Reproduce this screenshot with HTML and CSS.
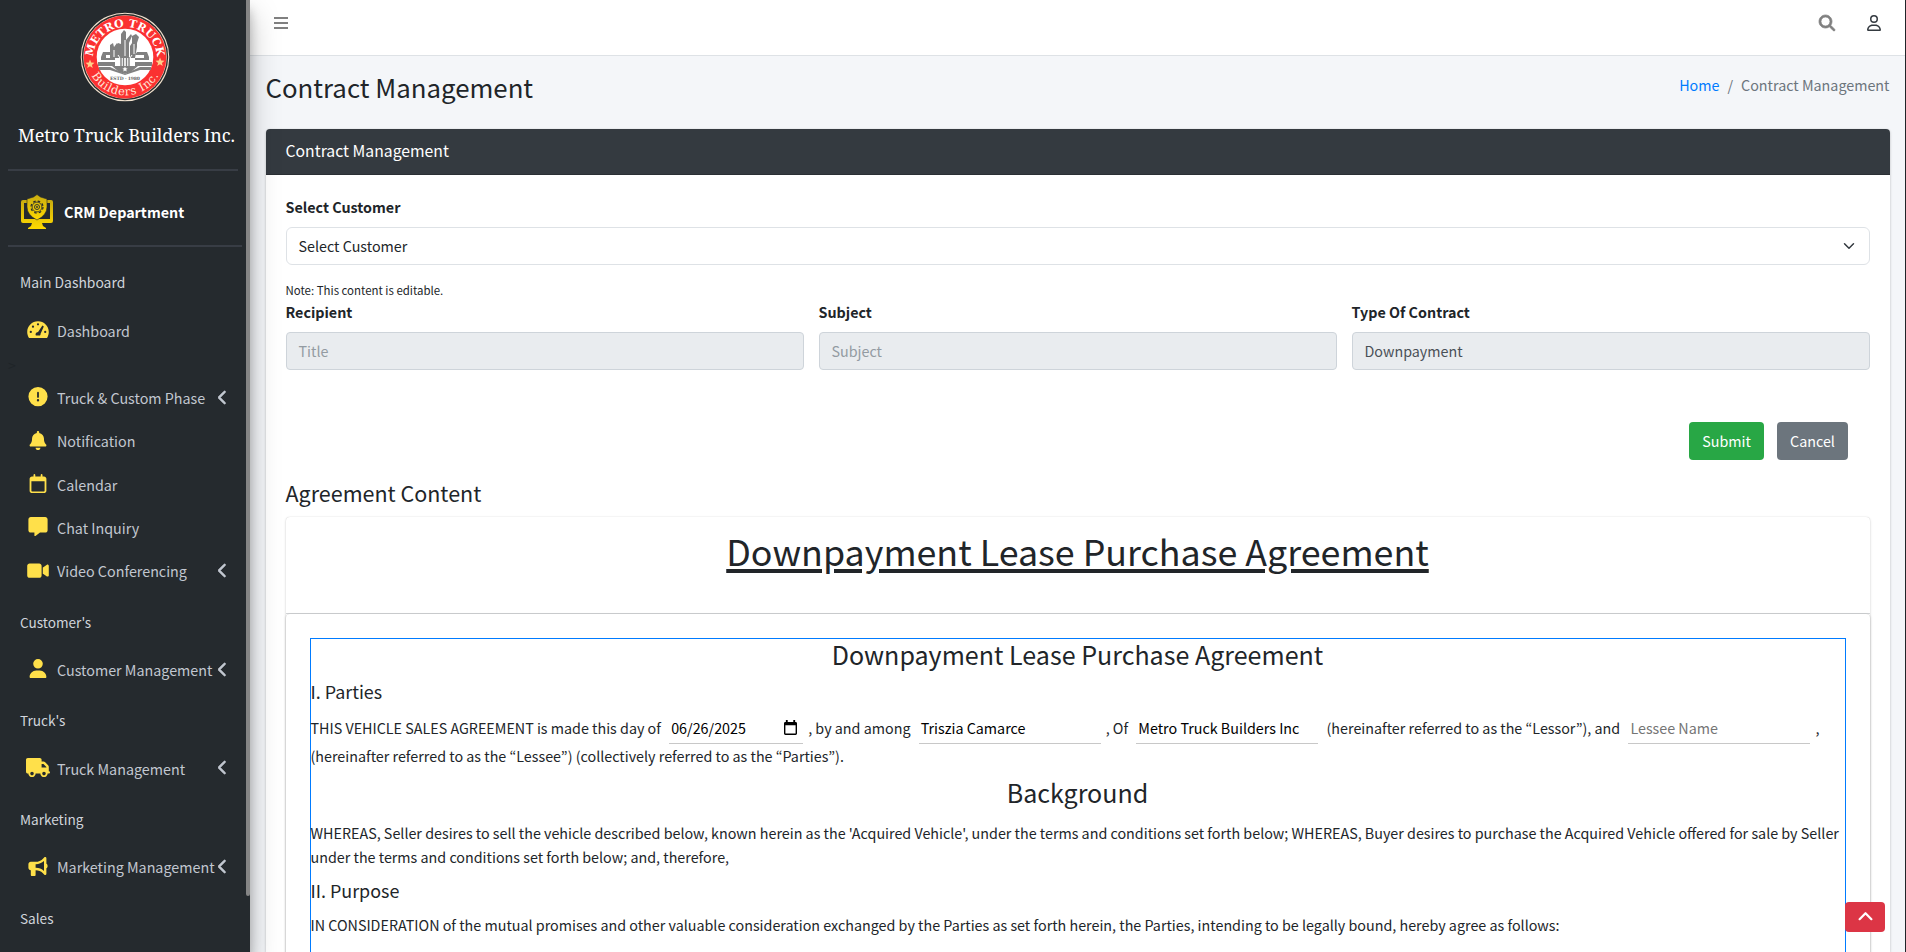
FILE: index.html
```html
<!DOCTYPE html>
<html lang="en">
<head>
<meta charset="utf-8">
<title>Contract Management</title>
<link rel="stylesheet" href="styles.css">
</head>
<body>
<svg class="defs" width="0" height="0">
  <symbol id="chev" viewBox="0 0 320 512"><path d="M9.4 233.4c-12.5 12.5-12.5 32.8 0 45.3l192 192c12.5 12.5 32.8 12.5 45.3 0s12.5-32.8 0-45.3L77.3 256 246.6 86.6c12.5-12.5 12.5-32.8 0-45.3s-32.8-12.5-45.3 0l-192 192z"/></symbol>
</svg>
<div class="app">
  <aside class="sidebar">
    <div class="brand">
      <svg class="logo" viewBox="0 0 90 90">
        <defs>
          <path id="arcTop" d="M13 47a32 32 0 0 1 64 0"/>
          <path id="arcBot" d="M6.600 45a38.400 38.400 0 0 0 76.800 0"/>
        </defs>
        <circle cx="45" cy="45" r="44.3" fill="#f3e3cf"/>
        <circle cx="45" cy="45" r="43.2" fill="#2b2b2b"/>
        <circle cx="45" cy="45" r="41.8" fill="#f3e3cf"/>
        <circle cx="45" cy="45" r="41.4" fill="#fb3131"/>
        <circle cx="45" cy="45" r="28.3" fill="#fff"/>
        <g fill="#808080">
          <path d="M30 46V33l3-2 1 4 3-4 2 2v13zM38 46V31l3 1V22l3-4 2 2v8l5-6 1 2-3 7v15zM50 46V34l2-3v-7l4-2 3 3-2 6v4l-2 11z"/>
          <path d="M23 40h10l2 3h-9v3h9v2H21v-3zM67 40H57l-2 3h9v3h-9v2h14v-3z"/>
          <path d="M18 50h17v4H18zM55 50h17v4H55zM19 55h11l15 7 15-7h11v3H60l-15 5-15-5H19z"/>
          <path d="M32 54h26l-7 6-6 2-6-2z"/>
        </g>
        <g stroke="#fff" stroke-width="1" fill="none"><path d="M38 43l2 3-2 3 2 3-2 2M52 43l-2 3 2 3-2 3 2 2M45 28v16M34 38v7M54 32v10"/></g>
        <g stroke="#808080" stroke-width="1.4"><path d="M41 45v11M43.500 45v11M46.500 45v11M49 45v11"/></g>
        <path d="M45 54.600l.8 1.600 1.800.2-1.300 1.200.3 1.800-1.600-.9-1.600.9.300-1.800-1.300-1.200 1.800-.2z" fill="#fff"/>
        <text x="45" y="68" class="est" text-anchor="middle" textLength="30">ESTD · 1980</text>
        <path id="star" d="M10 47.500l1.200 3.100 3.300.2-2.600 2.100.9 3.200-2.800-1.800-2.800 1.800.9-3.200-2.600-2.100 3.300-.2z" fill="#ffcf8a"/>
        <use href="#star" x="70" y="-2"/>
        <text class="arc-top"><textPath href="#arcTop" startOffset="50%" text-anchor="middle" textLength="96">METRO TRUCK</textPath></text>
        <text class="arc-bot"><textPath href="#arcBot" startOffset="50%" text-anchor="middle" textLength="82">Builders Inc.</textPath></text>
      </svg>
      <div class="brand-name">Metro Truck Builders Inc.</div>
    </div>
    <div class="dept">
      <svg class="dept-icon" viewBox="0 0 34 36">
        <defs><linearGradient id="gold" x1="0" y1="0" x2="0" y2="1"><stop offset="0" stop-color="#c9ac10"/><stop offset="1" stop-color="#ffd900"/></linearGradient></defs>
        <path fill="url(#gold)" fill-rule="evenodd" d="M3 6H31q2 0 2 2V27q0 2-2 2H22l1 3 3 2v1H8v-1l3-2 1-3H3q-2 0-2-2V8q0-2 2-2zM4 9v16h26V9z"/>
        <path fill="url(#gold)" stroke="#252a2e" stroke-width=".6" d="M17 .5l3.500 2.500 6.500 2v8q0 8-10 13Q7 21 7 13V5l6.500-2z"/>
        <g fill="none" stroke="#252a2e"><circle cx="17" cy="13" r="6" stroke-width="1.200" stroke-dasharray="2.600 2.110"/><circle cx="17" cy="13" r="4.900" stroke-width=".8"/><circle cx="17" cy="13" r="2.500" stroke-width=".9"/></g>
        <circle cx="17" cy="13" r=".9" fill="#252a2e"/>
      </svg>
      <span>CRM Department</span>
    </div>
    <nav class="menu">
      <div class="group first">Main Dashboard</div>
      <a class="item"><svg class="ico" viewBox="0 0 576 512"><path d="M288 32C128.940 32 0 160.940 0 320c0 52.800 14.250 102.260 39.060 144.800 5.610 9.620 16.300 15.200 27.440 15.200h443c11.140 0 21.830-5.580 27.440-15.200C561.750 422.260 576 372.800 576 320c0-159.060-128.940-288-288-288z"/><g class="hole"><circle cx="288" cy="116" r="30"/><circle cx="154" cy="180" r="30"/><circle cx="96" cy="320" r="30"/><circle cx="480" cy="320" r="30"/><path d="M405 150l38 26-86 190q2 34-16 50H232q-14-20-8-48 16-46 66-48z"/></g></svg><span>Dashboard</span></a>
      <div class="stray">&gt;</div>
      <a class="item"><svg class="ico" viewBox="0 0 512 512"><path d="M256 512A256 256 0 1 0 256 0a256 256 0 1 0 0 512zm0-384c13.300 0 24 10.700 24 24l0 112c0 13.300-10.700 24-24 24s-24-10.700-24-24l0-112c0-13.300 10.700-24 24-24zM224 352a32 32 0 1 1 64 0 32 32 0 1 1 -64 0z"/></svg><span>Truck &amp; Custom Phase</span><svg class="chev"><use href="#chev"/></svg></a>
      <a class="item"><svg class="ico" viewBox="0 0 448 512"><path d="M224 0c-17.700 0-32 14.300-32 32l0 19.200C119 66 64 130.600 64 208l0 18.800c0 47-17.300 92.400-48.500 127.600l-7.400 8.300c-8.400 9.400-10.400 22.900-5.300 34.400S19.400 416 32 416l384 0c12.600 0 24-7.400 29.200-18.900s3.100-25-5.300-34.400l-7.400-8.300C401.300 319.200 384 273.900 384 226.800l0-18.800c0-77.400-55-142-128-156.800L256 32c0-17.700-14.300-32-32-32zm45.300 493.300c12-12 18.700-28.300 18.700-45.300l-64 0-64 0c0 17 6.700 33.300 18.700 45.300s28.300 18.700 45.300 18.700s33.300-6.700 45.300-18.700z"/></svg><span>Notification</span></a>
      <a class="item"><svg class="ico" viewBox="0 0 448 512"><path fill-rule="evenodd" d="M152 24c0-13.300-10.700-24-24-24s-24 10.700-24 24v40H64C28.700 64 0 92.700 0 128v320c0 35.300 28.700 64 64 64h320c35.300 0 64-28.700 64-64V128c0-35.300-28.700-64-64-64h-40V24c0-13.300-10.700-24-24-24s-24 10.700-24 24v40H152zM48 192h352v256c0 8.800-7.200 16-16 16H64c-8.800 0-16-7.200-16-16z"/></svg><span>Calendar</span></a>
      <a class="item"><svg class="ico" viewBox="0 0 512 512"><path d="M64 0C28.700 0 0 28.700 0 64L0 352c0 35.300 28.700 64 64 64l96 0 0 80c0 6.100 3.400 11.600 8.800 14.300s11.900 2.100 16.800-1.500L309.300 416 448 416c35.300 0 64-28.700 64-64l0-288c0-35.300-28.700-64-64-64L64 0z"/></svg><span>Chat Inquiry</span></a>
      <a class="item"><svg class="ico" viewBox="0 0 576 512"><path d="M0 128C0 92.700 28.700 64 64 64l256 0c35.300 0 64 28.700 64 64l0 256c0 35.300-28.700 64-64 64L64 448c-35.300 0-64-28.700-64-64L0 128zM559.100 99.800c10.400 5.600 16.900 16.400 16.900 28.200l0 256c0 11.800-6.500 22.600-16.900 28.200s-23 5-32.900-1.600l-96-64L416 337.100l0-17.100 0-128 0-17.100 14.200-9.500 96-64c9.800-6.500 22.400-7.200 32.900-1.600z"/></svg><span>Video Conferencing</span><svg class="chev"><use href="#chev"/></svg></a>
      <div class="group">Customer's</div>
      <a class="item"><svg class="ico" viewBox="0 0 448 512"><path d="M224 256A128 128 0 1 0 224 0a128 128 0 1 0 0 256zm-45.700 48C79.800 304 0 383.800 0 482.300C0 498.700 13.300 512 29.700 512l388.600 0c16.400 0 29.700-13.300 29.700-29.700C448 383.800 368.200 304 269.700 304l-91.400 0z"/></svg><span>Customer Management</span><svg class="chev"><use href="#chev"/></svg></a>
      <div class="group">Truck's</div>
      <a class="item"><svg class="ico" viewBox="0 0 640 512"><path d="M48 0C21.500 0 0 21.500 0 48L0 368c0 26.500 21.500 48 48 48l16 0c0 53 43 96 96 96s96-43 96-96l128 0c0 53 43 96 96 96s96-43 96-96l32 0c17.700 0 32-14.300 32-32s-14.300-32-32-32l0-64 0-32 0-18.700c0-17-6.700-33.300-18.700-45.300L512 114.700c-12-12-28.300-18.700-45.300-18.700L416 96l0-48c0-26.500-21.500-48-48-48L48 0zM416 160l50.700 0L544 237.300l0 18.700-128 0 0-96zM112 416a48 48 0 1 1 96 0 48 48 0 1 1 -96 0zm368-48a48 48 0 1 1 0 96 48 48 0 1 1 0-96z"/></svg><span>Truck Management</span><svg class="chev"><use href="#chev"/></svg></a>
      <div class="group">Marketing</div>
      <a class="item"><svg class="ico" viewBox="0 0 512 512"><path d="M480 32c0-12.900-7.800-24.600-19.800-29.600s-25.700-2.200-34.900 6.900L381.700 53c-48 48-113.100 75-181 75l-8.700 0-32 0-96 0c-35.300 0-64 28.700-64 64l0 96c0 35.300 28.700 64 64 64l0 128c0 17.700 14.300 32 32 32l64 0c17.700 0 32-14.300 32-32l0-128 8.700 0c67.900 0 133 27 181 75l43.600 43.600c9.200 9.200 22.900 11.900 34.900 6.900s19.800-16.600 19.800-29.600l0-147.600c18.600-8.800 32-32.500 32-60.400s-13.400-51.600-32-60.400L480 32zm-64 76.700L416 240l0 131.300C357.200 317.800 280.500 288 200.700 288l-8.700 0 0-96 8.700 0c79.800 0 156.500-29.800 215.300-83.300z"/></svg><span>Marketing Management</span><svg class="chev"><use href="#chev"/></svg></a>
      <div class="group">Sales</div>
    </nav>
    <div class="scroll-thumb"></div>
  </aside>

  <div class="main">
    <header class="topbar">
      <svg class="burger" viewBox="0 0 14 14"><path d="M0 2h14M0 7h14M0 12h14" stroke="#808080" stroke-width="1.800"/></svg>
      <div class="topbar-right">
        <svg class="search" viewBox="0 0 512 512"><path d="M416 208c0 45.900-14.900 88.300-40 122.700L502.600 457.400c12.500 12.500 12.500 32.800 0 45.300s-32.800 12.500-45.300 0L330.700 376c-34.400 25.200-76.800 40-122.700 40C93.100 416 0 322.900 0 208S93.100 0 208 0S416 93.100 416 208zM208 352a144 144 0 1 0 0-288 144 144 0 1 0 0 288z"/></svg>
        <svg class="user" viewBox="0 0 448 512"><path d="M304 128a80 80 0 1 0 -160 0 80 80 0 1 0 160 0zM96 128a128 128 0 1 1 256 0A128 128 0 1 1 96 128zM49.300 464l349.500 0c-8.900-63.300-63.300-112-129-112l-91.400 0c-65.700 0-120.100 48.700-129 112zM0 482.300C0 383.800 79.800 304 178.300 304l91.400 0C368.200 304 448 383.800 448 482.300c0 16.400-13.300 29.700-29.700 29.700L29.700 512C13.300 512 0 498.700 0 482.300z"/></svg>
      </div>
    </header>
    <div class="page-head">
      <h1>Contract Management</h1>
      <div class="crumbs"><a>Home</a><span>/</span><span>Contract Management</span></div>
    </div>
    <section class="card">
      <div class="card-header">Contract Management</div>
      <div class="card-body">
        <label class="lbl">Select Customer</label>
        <div class="select"><span>Select Customer</span><svg viewBox="0 0 16 16"><path d="m2 5 6 6 6-6" fill="none" stroke="#343a40" stroke-width="2" stroke-linecap="round" stroke-linejoin="round"/></svg></div>
        <div class="note">Note: This content is editable.</div>
        <div class="fields">
          <div><label class="lbl">Recipient</label><div class="input ph">Title</div></div>
          <div><label class="lbl">Subject</label><div class="input ph">Subject</div></div>
          <div><label class="lbl">Type Of Contract</label><div class="input">Downpayment</div></div>
        </div>
        <div class="actions"><button class="btn submit">Submit</button><button class="btn cancel">Cancel</button></div>
        <h4>Agreement Content</h4>
        <div class="sheet">
          <div class="sheet-title">Downpayment Lease Purchase Agreement</div>
          <div class="sheet-body">
            <div class="editor">
              <h3>Downpayment Lease Purchase Agreement</h3>
              <h5>I. Parties</h5>
              <p class="parties">THIS VEHICLE SALES AGREEMENT is made this day of <span class="line date">06/26/2025<svg viewBox="0 0 14 16"><path fill-rule="evenodd" d="M2 0h2v2h6V0h2v2h.5q1.500 0 1.500 1.500v11q0 1.500-1.500 1.500h-11Q0 16 0 14.500v-11Q0 2 1.500 2H2zM1.500 5.500v9h11v-9z"/></svg></span>, by and among <span class="line">Triszia Camarce</span>, Of <span class="line">Metro Truck Builders Inc</span> (hereinafter referred to as the “Lessor”), and <span class="line hint">Lessee Name</span>,<br>(hereinafter referred to as the “Lessee”) (collectively referred to as the “Parties”).</p>
              <h3 class="bg">Background</h3>
              <p>WHEREAS, Seller desires to sell the vehicle described below, known herein as the 'Acquired Vehicle', under the terms and conditions set forth below; WHEREAS, Buyer desires to purchase the Acquired Vehicle offered for sale by Seller<br>under the terms and conditions set forth below; and, therefore,</p>
              <h5 class="purpose">II. Purpose</h5>
              <p>IN CONSIDERATION of the mutual promises and other valuable consideration exchanged by the Parties as set forth herein, the Parties, intending to be legally bound, hereby agree as follows:</p>
            </div>
          </div>
        </div>
      </div>
    </section>
  </div>
</div>
<button class="to-top"><svg viewBox="0 0 14 14"><path d="M1.500 9.500 7 4l5.500 5.500" fill="none" stroke="#fff" stroke-width="2.100" stroke-linecap="round" stroke-linejoin="round"/></svg></button>
</body>
</html>
```
FILE: styles.css
```css
* { box-sizing: border-box; }
body {
  margin: 0;
  height: 952px;
  overflow: hidden;
  font-family: "Noto Sans CJK KR", "Noto Sans CJK JP", "Noto Sans", sans-serif;
  font-size: 14.32px;
  line-height: 24px;
  color: #212529;
  background: #f4f6f9;
}
h1, h3, h4, h5, p { margin: 0; font-weight: 400; }
.defs { position: absolute; }
.app { display: flex; height: 952px; border-right: 1px solid #212529; }

/* Sidebar */
.sidebar {
  position: relative;
  z-index: 2;
  flex: 0 0 250px;
  width: 250px;
  min-width: 0;
  height: 952px;
  background: #252a2e;
  box-shadow: 0 14px 28px rgba(0,0,0,.25), 0 10px 10px rgba(0,0,0,.22);
}
.scroll-thumb { position: absolute; top: 0; right: 0; width: 4px; height: 896px; background: #858585; border-radius: 0 0 2px 2px; }
.brand { height: 171px; margin: 0 12px 0 8px; padding-top: 12px; border-bottom: 2px solid #383d45; }
.logo { display: block; width: 90px; height: 90px; margin-left: 72px; }
.arc-top { font: 700 11px "DejaVu Serif", serif; fill: #fff; }
.arc-bot { font: 400 11.500px "DejaVu Serif", serif; fill: #ffe9dc; }
.est { font: 700 4.500px "DejaVu Serif", serif; fill: #666; }
.brand-name {
  margin: 19px 0 0 10px;
  font: 400 18px/28px "Noto Serif", "DejaVu Serif Condensed", "DejaVu Serif", serif;
  letter-spacing: -.1px;
  white-space: nowrap;
  color: #fff;
}
.dept {
  display: flex;
  align-items: center;
  gap: 10px;
  height: 76px;
  margin: 0 8px;
  padding: 8px 0 0 12px;
  border-bottom: 2px solid #383d45;
  color: #fff;
  font-weight: 700;
}
.dept-icon { width: 34px; height: 36px; }
.menu { display: flex; flex-direction: column; }
.group { height: 55.400px; padding: 16px 20px 0; font-size: 13.600px; line-height: 24px; color: #d0d4db; }
.group.first { height: 63px; padding-top: 23px; font-size: 13.900px; }
.item { position: relative; display: flex; align-items: center; height: 43.300px; padding-left: 26px; color: #c2c7d0; white-space: nowrap; }
.item span { margin: -2px 0 0 7px; }
.ico { width: 24px; height: 19.200px; margin-top: -4px; fill: #ffe04a; }
.hole { fill: #252a2e; }
.chev { position: absolute; left: 217.500px; top: 12.500px; width: 9.500px; height: 15px; fill: #c2c7d0; stroke: #c2c7d0; stroke-width: 24px; }
.stray { height: 24px; padding-left: 8px; font-size: 14px; color: #1f2428; }

/* Top bar and page heading */
.main { flex: 1; min-width: 0; }
.topbar { display: flex; justify-content: space-between; height: 56px; padding: 15px 24px 0; background: #fff; border-bottom: 1px solid #dee2e6; }
.burger { width: 14px; height: 14px; margin-top: 1px; }
.topbar-right { display: flex; gap: 32px; }
.search { width: 16px; height: 16px; fill: #808080; stroke: #808080; stroke-width: 24px; overflow: visible; }
.user { width: 14px; height: 16px; fill: #343a40; }
.page-head { display: flex; justify-content: space-between; height: 73px; padding: 14px 15.500px 0 15.500px; }
h1 { font-size: 25.800px; line-height: 34px; }
.crumbs { display: flex; gap: 8px; margin-top: 3px; color: #6c757d; }
.crumbs a { color: #007bff; }

/* Contract card */
.card { height: 823px; margin: 0 15px 0 16px; overflow: hidden; background: #fff; border-radius: 4px 4px 0 0; box-shadow: 0 0 1px rgba(0,0,0,.125), 0 1px 3px rgba(0,0,0,.2); }
.card-header { height: 46px; padding: 10px 19.500px; font-size: 15.750px; color: #fff; background: #343a40; border-bottom: 1px solid #2a2f34; }
.card-body { padding: 20px 20.500px 0 19.500px; }
.lbl { display: block; height: 32px; font-weight: 700; }
.select { display: flex; justify-content: space-between; align-items: center; height: 38px; padding: 0 13px 0 12px; border: 1px solid #dee2e6; border-radius: 6px; }
.select svg { width: 12px; height: 12px; margin-right: 1px; }
.note { height: 25px; margin-top: 13px; font-size: 11.450px; }
.fields { display: grid; grid-template-columns: repeat(3, 1fr); gap: 15px; margin-top: -3px; }
.input { height: 38px; padding: 6px 12px; color: #495057; background: #e9ecef; border: 1px solid #ced4da; border-radius: 4px; }
.ph { color: #939ba2; }
.actions { display: flex; justify-content: flex-end; gap: 13px; margin: 52px 21.500px 0 0; }
.btn { height: 38px; padding: 0; border: 0; border-radius: 4px; font: inherit; color: #fff; }
.submit { width: 75px; background: #28a745; }
.cancel { width: 71px; background: #6c757d; }
h4 { height: 57px; padding-top: 18px; font-size: 21.500px; line-height: 30px; }
.sheet { height: 440px; background: #fff; border-radius: 4px; box-shadow: 0 0 1px rgba(0,0,0,.2), 0 1px 3px rgba(0,0,0,.15); }
.sheet-title { height: 97px; padding-top: 10px; text-align: center; font-size: 35.800px; line-height: 47px; text-decoration: underline; text-decoration-thickness: 4px; text-underline-offset: 3px; border-bottom: 1px solid #d3d5d7; }
.sheet-body { height: 343px; padding: 24px 24px 0; border-radius: 4px; box-shadow: 0 0 1px rgba(0,0,0,.2), 0 1px 3px rgba(0,0,0,.2); }
.editor { height: 400px; border: 1px solid #007bff; white-space: nowrap; }
h3 { height: 40px; text-align: center; font-size: 25.060px; line-height: 30.500px; }
h5 { height: 34px; font-size: 17.900px; line-height: 24px; }
.parties { height: 63px; line-height: 24px; padding-top: 2px; }
.line { display: inline-block; width: 182px; height: 28.500px; margin: 0 5px; padding: 1px 2px; vertical-align: baseline; color: #000; border-bottom: 1px solid #c8c8c8; }
.date { width: 134px; }
.date svg { float: right; width: 13px; height: 15px; margin: 4px 4px 0 0; }
.hint { padding-left: 2px; color: #757575; }
.bg { height: 45px; line-height: 33.600px; }
.purpose { height: 35px; margin-top: 9px; }

.to-top { position: absolute; left: 1845px; top: 902px; z-index: 5; display: flex; align-items: center; justify-content: center; width: 40px; height: 30px; padding: 0; border: 0; border-radius: 4px; background: #dc3545; }
.to-top svg { width: 15px; height: 15px; margin-top: -1px; }
```
